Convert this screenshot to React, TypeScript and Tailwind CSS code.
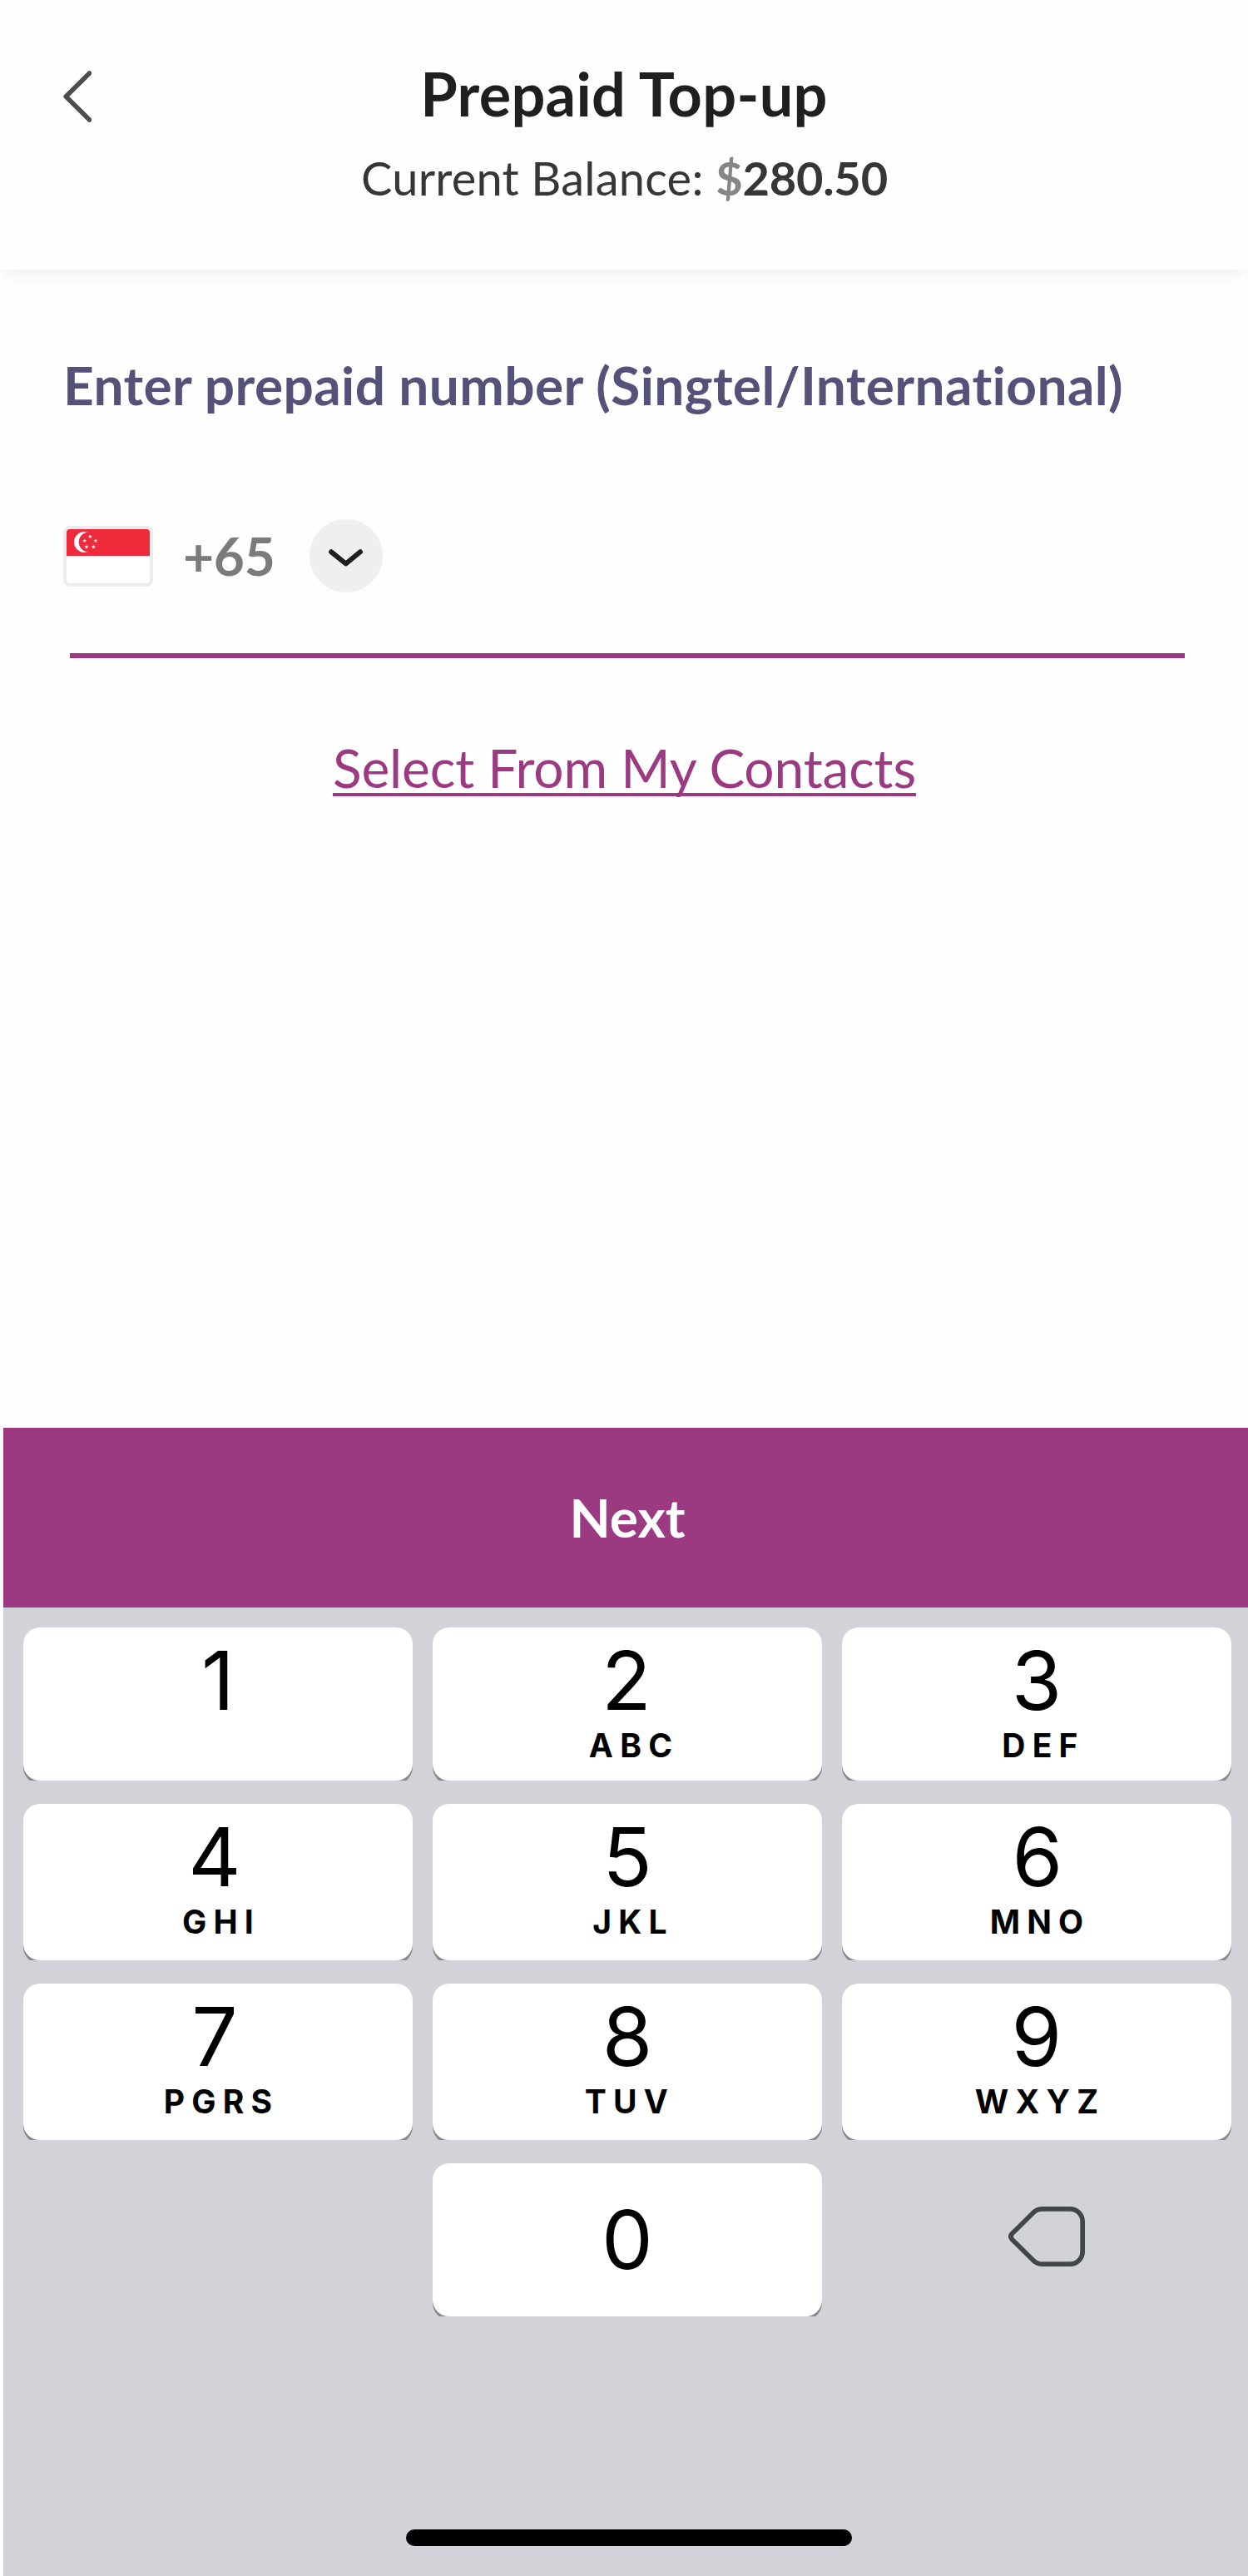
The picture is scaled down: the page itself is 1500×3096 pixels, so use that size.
import React from "react";

type PadKey = { digit: string; letters?: string; digitShift: string; lettersShift?: string };

const keyRows: { height: string; keys: PadKey[] }[] = [
  {
    height: "h-[184px]",
    keys: [
      { digit: "1", digitShift: "translate-x-0" },
      { digit: "2", letters: "ABC", digitShift: "-translate-x-px", lettersShift: "translate-x-[4px]" },
      { digit: "3", letters: "DEF", digitShift: "translate-x-0", lettersShift: "translate-x-[4px]" },
    ],
  },
  {
    height: "h-[188px]",
    keys: [
      { digit: "4", letters: "GHI", digitShift: "-translate-x-[4px]", lettersShift: "translate-x-0" },
      { digit: "5", letters: "JKL", digitShift: "translate-x-0", lettersShift: "translate-x-[3px]" },
      { digit: "6", letters: "MNO", digitShift: "translate-x-[1px]", lettersShift: "translate-x-0" },
    ],
  },
  {
    height: "h-[188px]",
    keys: [
      { digit: "7", letters: "PGRS", digitShift: "-translate-x-[4px]", lettersShift: "translate-x-0" },
      { digit: "8", letters: "TUV", digitShift: "translate-x-0", lettersShift: "-translate-x-px" },
      { digit: "9", letters: "WXYZ", digitShift: "translate-x-0", lettersShift: "translate-x-0" },
    ],
  },
];

function BackIcon() {
  return (
    <svg className="h-[64px] w-[36px]" viewBox="0 0 36 64" fill="none" stroke="#4c4c4c" strokeWidth="5.6" strokeLinecap="round" strokeLinejoin="round">
      <path d="M33.5 4 5.2 32l28.3 28" />
    </svg>
  );
}

function Star({ x, y }: { x: number; y: number }) {
  return (
    <path
      transform={`translate(${x} ${y}) scale(2.7)`}
      d="M0-1 .225-.309H.951L.363.118.588.809 0 .382-.588.809-.363.118-.951-.309H-.225Z"
      fill="#fff"
    />
  );
}

function SingaporeFlag() {
  return (
    <svg className="h-[73px] w-[108px]" viewBox="0 0 108 73">
      <rect width="108" height="73" rx="8" fill="#ececec" />
      <rect x="4" y="4" width="100" height="65" rx="4" fill="#fff" />
      <path d="M4 36.3V8a4 4 0 0 1 4-4h92a4 4 0 0 1 4 4v28.3Z" fill="#ef2b3b" />
      <circle cx="25.5" cy="19.5" r="12.5" fill="#fff" />
      <circle cx="30.7" cy="19.5" r="12" fill="#ef2b3b" />
      <Star x={32.3} y={12.9} />
      <Star x={25.7} y={17.9} />
      <Star x={39} y={17.9} />
      <Star x={28} y={25.4} />
      <Star x={36.3} y={25.4} />
    </svg>
  );
}

function BackspaceIcon() {
  return (
    <svg className="h-[72px] w-[92px]" viewBox="0 0 92 72" fill="none" stroke="#40464a" strokeWidth="5.7" strokeLinejoin="round">
      <path d="M41 2.85H74C82.5 2.85 89.15 9.5 89.15 18V54C89.15 62.5 82.5 69.15 74 69.15H41C36.5 69.15 33.5 68.2 30.5 65.2L4.7 39.7C2.3 37.2 2.3 34.8 4.7 32.3L30.5 6.8C33.5 3.8 36.5 2.85 41 2.85Z" />
    </svg>
  );
}

function Key({ item, height }: { item: PadKey; height: string }) {
  return (
    <div className={`${height} overflow-hidden`}>
      <button className="flex h-full w-full flex-col items-center rounded-[20px] bg-white pt-[14px] text-black shadow-[0_4px_0_#898a8d]">
        <span className={`block text-[98px] leading-[100px] ${item.digitShift}`}>{item.digit}</span>
        {item.letters && (
          <span className={`mt-[8px] block pl-[8px] text-[39px] font-bold leading-[40px] tracking-[8.2px] ${item.lettersShift}`}>
            {item.letters}
          </span>
        )}
      </button>
    </div>
  );
}

export default function App() {
  return (
    <div className="flex h-[3096px] w-[1500px] flex-col overflow-hidden bg-[#fefefe] font-['Lato',sans-serif]">
      <header className="grid h-[324px] shrink-0 grid-cols-[120px_1fr_120px] bg-[#fefefe] shadow-[0_10px_18px_-6px_rgba(0,0,0,0.07)]">
        <button className="mt-[84px] flex h-[64px] pl-[74px]" aria-label="Back">
          <BackIcon />
        </button>
        <div className="flex flex-col items-center pt-[68px]">
          <h1 className="whitespace-nowrap text-[72px] font-bold leading-[88px] tracking-[0.3px] text-[#1f1f1f]">Prepaid Top-up</h1>
          <p className="mt-[22px] whitespace-nowrap pl-[1px] text-[56px] leading-[72px] tracking-[0.2px] text-[#363636]">
            Current Balance: <span className="font-bold tracking-[-0.2px]"><span className="text-[#868686]">$</span>280.50</span>
          </p>
        </div>
      </header>

      <main className="flex flex-1 flex-col px-[76px] pt-[99px]">
        <h2 className="whitespace-nowrap text-[64px] font-bold leading-[80px] tracking-[0.38px] text-[#55527a]">
          Enter prepaid number (Singtel/International)
        </h2>
        <div className="mt-[121px] flex h-[88px] items-center">
          <SingaporeFlag />
          <span className="ml-[36px] w-[152px] text-[64px] font-bold leading-[80px] tracking-[-0.3px] text-[#7b7b7b]">+65</span>
          <button className="flex h-[88px] w-[88px] items-center justify-center rounded-full bg-[#efefef]" aria-label="Choose country code">
            <svg className="h-[88px] w-[88px]" viewBox="0 0 88 88" fill="none" stroke="#1f1f1f" strokeWidth="6" strokeLinecap="round" strokeLinejoin="round">
              <path d="m26.2 39.3 17.5 14.2L61 39.3" />
            </svg>
          </button>
        </div>
        <div className="ml-[8px] mt-[73px] h-[6px] w-[1340px] bg-[#9b3a80]" />
        <a className="mt-[92px] self-center whitespace-nowrap pl-[1px] text-[64px] leading-[80px] tracking-[-0.13px] text-[#9b3a80] underline decoration-4 underline-offset-[6px] [text-decoration-skip-ink:none]">
          Select From My Contacts
        </a>
      </main>

      <section className="ml-[4px] shrink-0">
        <button className="flex h-[216px] w-full items-center justify-center bg-[#9b3a80] pl-[4px] text-[64px] font-bold leading-[80px] text-white">
          Next
        </button>
        <div className="flex h-[1164px] flex-col bg-[#d2d3d8] pl-[24px] pr-[20px] pt-[24px] font-['Inter',sans-serif]">
          <div className="flex flex-col gap-[28px]">
            {keyRows.map((row) => (
              <div key={row.keys[0].digit} className="grid grid-cols-3 gap-[24px]">
                {row.keys.map((item) => (
                  <Key key={item.digit} item={item} height={row.height} />
                ))}
              </div>
            ))}
            <div className="grid grid-cols-3 gap-[24px]">
              <div />
              <div className="h-[184px] overflow-hidden">
                <button className="flex h-full w-full flex-col items-center rounded-[20px] bg-white pt-[42px] text-[98px] leading-[100px] text-black shadow-[0_4px_0_#898a8d]">
                  0
                </button>
              </div>
              <button className="flex h-[184px] pl-[200px] pt-[52px]" aria-label="Delete">
                <BackspaceIcon />
              </button>
            </div>
          </div>
          <div className="ml-[460px] mt-[256px] h-[20px] w-[536px] rounded-full bg-black" />
        </div>
      </section>
    </div>
  );
}
